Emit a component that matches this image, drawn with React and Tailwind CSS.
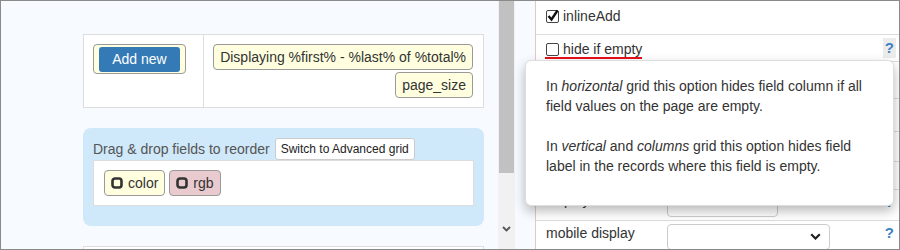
import React from "react";

function Square() {
    return (
        <svg width="12" height="12" viewBox="0 0 12 12" className="shrink-0">
            <rect x="1.5" y="1.5" width="9" height="9" rx="2.5" fill="none" stroke="#333" strokeWidth="2.6" />
        </svg>
    );
}

function Chip({ label, bg }) {
    return (
        <div className={`flex items-center h-[26px] border border-[#999] rounded-[4px] px-[6px] gap-[5px] ${bg}`}>
            <Square />
            <span className="leading-[16px]">{label}</span>
        </div>
    );
}

function Checkbox({ checked }) {
    return (
        <span className="relative inline-block w-[13px] h-[13px] border border-[#444] rounded-[2px] bg-white shrink-0">
            {checked && (
                <svg width="14" height="14" viewBox="0 0 14 14" className="absolute left-[-1px] top-[-2px] overflow-visible">
                    <path d="M2.5 7 L5.5 10.5 L11.5 1.5" fill="none" stroke="#111" strokeWidth="2.4" />
                </svg>
            )}
        </span>
    );
}

function Chevron({ className }) {
    return (
        <svg width="11" height="7" viewBox="0 0 11 7" className={className}>
            <path d="M1.2 1.2 L5.5 5.5 L9.8 1.2" fill="none" stroke="#222" strokeWidth="2.2" />
        </svg>
    );
}

function Help({ hover }) {
    return (
        <span className={`ml-auto font-bold text-[15px] leading-[20px] text-[#3b82c4] px-[2px] ${hover ? "bg-[#ececec]" : ""}`}>?</span>
    );
}

export default function App() {
    return (
        <div className="relative w-[900px] h-[250px] overflow-hidden border border-[#8a8a8a] bg-white flex font-['Liberation_Sans',Arial,sans-serif] text-[14px] text-[#333]">
            {/* left pane */}
            <div className="w-[497px] h-full bg-[#f7fbff] overflow-hidden shrink-0">
                <div className="ml-[82px] mt-[33px] w-[401px]">
                    <div className="flex h-[74px] border border-[#ddd] bg-white">
                        <div className="w-[120px] border-r border-[#ddd] pl-[9px] pt-[9px]">
                            <div className="inline-block border border-[#999] rounded-[4px] bg-[#ffffe0] pt-[2px] pb-[1px] px-[5px]">
                                <div className="w-[81px] h-[25px] leading-[25px] rounded-[3px] bg-[#337ab7] text-white text-center">Add new</div>
                            </div>
                        </div>
                        <div className="flex-1 flex flex-col items-end gap-[2px] pt-[9px] pr-[10px]">
                            <div className="h-[26px] leading-[24px] border border-[#999] rounded-[4px] bg-[#ffffe0] px-[6px]">
                                Displaying %first% - %last% of %total%
                            </div>
                            <div className="h-[26px] leading-[24px] border border-[#999] rounded-[4px] bg-[#ffffe0] px-[6px]">
                                page_size
                            </div>
                        </div>
                    </div>

                    <div className="mt-[20px] h-[98px] rounded-[8px] bg-[#cfe8fa] px-[10px] pt-[10px]">
                        <div className="flex items-center h-[22px]">
                            <span className="text-[#555]">Drag &amp; drop fields to reorder</span>
                            <span className="ml-[5px] h-[22px] leading-[20px] px-[5px] border border-[#ccc] rounded-[3px] bg-white text-[12px] text-[#222]">
                                Switch to Advanced grid
                            </span>
                        </div>
                        <div className="h-[46px] border border-[#ddd] bg-white pl-[10px] pt-[9px] flex items-start gap-[4px]">
                            <Chip label="color" bg="bg-[#ffffe0]" />
                            <Chip label="rgb" bg="bg-[#e8cacf]" />
                        </div>
                    </div>

                    <div className="mt-[20px] h-[20px] border-t border-x border-[#ddd] bg-white"></div>
                </div>
            </div>

            {/* scrollbar */}
            <div className="w-[17px] h-full bg-[#f1f1f1] flex flex-col shrink-0">
                <div className="ml-[1px] w-[15px] h-[172px] bg-[#c1c1c1]"></div>
                <div className="flex-1"></div>
                <div className="h-[17px] flex items-center justify-center">
                    <svg width="9" height="6" viewBox="0 0 9 6">
                        <path d="M1 1 L4.5 4.5 L8 1" fill="none" stroke="#555" strokeWidth="1.8" />
                    </svg>
                </div>
                <div className="h-[12px]"></div>
            </div>

            <div className="w-[20px] h-full bg-[#f7fbff] shrink-0"></div>

            {/* right panel */}
            <div className="flex-1 h-full border-l border-[#e9c6c6] bg-white flex flex-col">
                <div className="h-[34px] shrink-0 border-b border-[#ddd] flex items-center gap-[4px] pl-[10px] pr-[5px] pb-[3px]">
                    <Checkbox checked />
                    <span className="leading-[16px]">inlineAdd</span>
                </div>
                <div className="h-[27px] shrink-0 border-b border-[#ddd] flex items-center pl-[9px] pr-[3px]">
                    <label className="mt-[4px] inline-flex items-center gap-[4px] pl-[1px] border-b-2 border-[#e8101a]">
                        <Checkbox />
                        <span className="leading-[16px]">hide if empty</span>
                    </label>
                    <Help hover />
                </div>
                <div className="h-[37px] shrink-0 border-b border-[#ddd]"></div>
                <div className="h-[33px] shrink-0 border-b border-[#ddd]"></div>
                <div className="h-[30px] shrink-0 border-b border-[#ddd]"></div>
                <div className="h-[28px] shrink-0 border-b border-[#ddd]"></div>
                <div className="h-[31px] shrink-0 border-b border-[#ddd] flex items-start pl-[10px] pr-[5px]">
                    <span className="w-[121px] leading-[20px]">display</span>
                    <div className="mt-[6px] w-[111px] h-[21px] border border-[#ccc] rounded-[4px] bg-white flex items-start justify-end pr-[10px] pt-[2px]">
                        <Chevron />
                    </div>
                    <span className="ml-auto mt-[2px] font-bold text-[15px] leading-[20px] text-[#3b82c4]">?</span>
                </div>
                <div className="flex-1 flex items-start pl-[10px] pr-[5px]">
                    <span className="w-[121px] mt-[2px] leading-[20px]">mobile display</span>
                    <div className="mt-[3px] w-[163px] h-[26px] border border-[#ccc] rounded-[4px] bg-white flex items-start justify-end pr-[8px] pt-[8px]">
                        <Chevron />
                    </div>
                    <span className="ml-auto mt-[2px] font-bold text-[15px] leading-[20px] text-[#3b82c4]">?</span>
                </div>
            </div>

            {/* help popup */}
            <div className="absolute left-[524px] top-[59px] w-[369px] h-[146px] bg-white border border-[#ddd] rounded-[6px] shadow-[0_5px_12px_rgba(0,0,0,0.28)] px-[20px] pt-[15px] leading-[20px] text-[#333]">
                <p className="mb-[20px]">
                    In <i>horizontal</i> grid this option hides field column if all<br />
                    field values on the page are empty.
                </p>
                <p>
                    In <i>vertical</i> and <i>columns</i> grid this option hides field<br />
                    label in the records where this field is empty.
                </p>
            </div>
        </div>
    );
}
